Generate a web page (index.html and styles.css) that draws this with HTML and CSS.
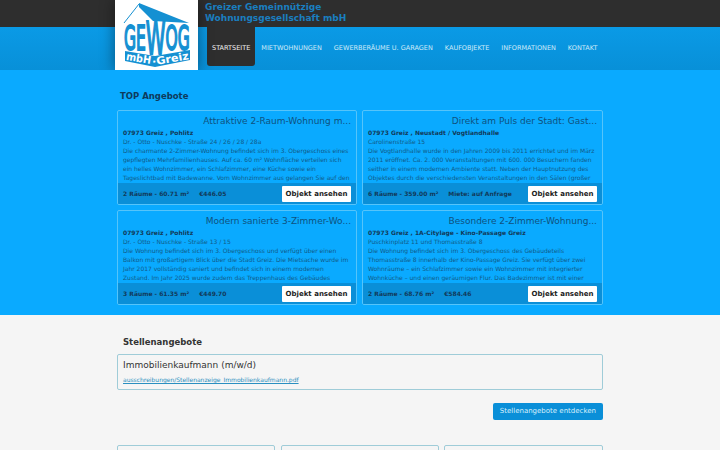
FILE: index.html
```html
<!DOCTYPE html>
<html lang="de">
<head>
    <meta charset="UTF-8">
    <meta name="viewport" content="width=device-width, initial-scale=1.0">
    <title>GEWOG Greiz</title>
    <link rel="stylesheet" href="styles.css">
</head>
<body>
    <header class="header">
        <a class="logo" href="#">
            <svg width="83" height="70" viewBox="0 0 83 70">
                <path class="logo-line" d="M9 23 L24 4"/>
                <path class="logo-fill" d="M24 3 L74 23 L38 21 L24 7 Z"/>
                <text class="logo-word" transform="translate(9 0) scale(.455 1)"><tspan y="50">GE</tspan><tspan y="54" class="logo-w">W</tspan><tspan y="50">OG</tspan></text>
                <path class="logo-fill" d="M10 51 L40 56 L75 50 L75 60 L40 67 L10 61 Z"/>
                <text class="logo-sub" x="11" y="62" textLength="25" lengthAdjust="spacingAndGlyphs" transform="rotate(9.5 24 59)">mbH</text>
                <text class="logo-sub" x="37" y="62.5" textLength="37" lengthAdjust="spacingAndGlyphs" transform="rotate(-10 55 60)">·Greiz</text>
            </svg>
        </a>
        <div class="topbar">
            <div class="brand">Greizer Gemeinnützige<br>Wohnungsgesellschaft mbH</div>
        </div>
        <nav class="nav">
            <a class="nav-item active" href="#">STARTSEITE</a>
            <a class="nav-item" href="#">MIETWOHNUNGEN</a>
            <a class="nav-item" href="#">GEWERBERÄUME U. GARAGEN</a>
            <a class="nav-item" href="#">KAUFOBJEKTE</a>
            <a class="nav-item" href="#">INFORMATIONEN</a>
            <a class="nav-item" href="#">KONTAKT</a>
        </nav>
    </header>

    <section class="top">
        <h2 class="top-title">TOP Angebote</h2>
        <div class="offers">
            <article class="offer">
                <h3 class="offer-title">Attraktive 2-Raum-Wohnung m...</h3>
                <div class="offer-body">
                    <b>07973 Greiz , Pohlitz</b>
                    <p>Dr. - Otto - Nuschke - Straße 24 / 26 / 28 / 28a</p>
                    <p>Die charmante 2-Zimmer-Wohnung befindet sich im 3. Obergeschoss eines gepflegten Mehrfamilienhauses. Auf ca. 60 m² Wohnfläche verteilen sich ein helles Wohnzimmer, ein Schlafzimmer, eine Küche sowie ein Tageslichtbad mit Badewanne. Vom Wohnzimmer aus gelangen Sie auf den</p>
                </div>
                <div class="offer-foot">
                    <span class="offer-size">2 Räume - 60.71 m²</span>
                    <span class="offer-price">€446.05</span>
                    <a class="offer-btn" href="#">Objekt ansehen</a>
                </div>
            </article>
            <article class="offer">
                <h3 class="offer-title">Direkt am Puls der Stadt: Gast...</h3>
                <div class="offer-body">
                    <b>07973 Greiz , Neustadt / Vogtlandhalle</b>
                    <p>Carolinenstraße 15</p>
                    <p>Die Vogtlandhalle wurde in den Jahren 2009 bis 2011 errichtet und im März 2011 eröffnet. Ca. 2. 000 Veranstaltungen mit 600. 000 Besuchern fanden seither in einem modernen Ambiente statt. Neben der Hauptnutzung des Objektes durch die verschiedensten Veranstaltungen in den Sälen (großer</p>
                </div>
                <div class="offer-foot">
                    <span class="offer-size">6 Räume - 359.00 m²</span>
                    <span class="offer-price">Miete: auf Anfrage</span>
                    <a class="offer-btn" href="#">Objekt ansehen</a>
                </div>
            </article>
            <article class="offer">
                <h3 class="offer-title">Modern sanierte 3-Zimmer-Wo...</h3>
                <div class="offer-body">
                    <b>07973 Greiz , Pohlitz</b>
                    <p>Dr. - Otto - Nuschke - Straße 13 / 15</p>
                    <p>Die Wohnung befindet sich im 3. Obergeschoss und verfügt über einen Balkon mit großartigem Blick über die Stadt Greiz. Die Mietsache wurde im Jahr 2017 vollständig saniert und befindet sich in einem modernen Zustand. Im Jahr 2025 wurde zudem das Treppenhaus des Gebäudes</p>
                </div>
                <div class="offer-foot">
                    <span class="offer-size">3 Räume - 61.35 m²</span>
                    <span class="offer-price">€449.70</span>
                    <a class="offer-btn" href="#">Objekt ansehen</a>
                </div>
            </article>
            <article class="offer">
                <h3 class="offer-title">Besondere 2-Zimmer-Wohnung...</h3>
                <div class="offer-body">
                    <b>07973 Greiz , 1A-Citylage - Kino-Passage Greiz</b>
                    <p>Puschkinplatz 11 und Thomasstraße 8</p>
                    <p>Die Wohnung befindet sich im 3. Obergeschoss des Gebäudeteils Thomasstraße 8 innerhalb der Kino-Passage Greiz. Sie verfügt über zwei Wohnräume – ein Schlafzimmer sowie ein Wohnzimmer mit integrierter Wohnküche – und einen geräumigen Flur. Das Badezimmer ist mit einer</p>
                </div>
                <div class="offer-foot">
                    <span class="offer-size">2 Räume - 68.76 m²</span>
                    <span class="offer-price">€584.46</span>
                    <a class="offer-btn" href="#">Objekt ansehen</a>
                </div>
            </article>
        </div>
    </section>

    <section class="jobs">
        <h2 class="jobs-title">Stellenangebote</h2>
        <div class="job">
            <h3 class="job-name">Immobilienkaufmann (m/w/d)</h3>
            <a class="job-link" href="#">ausschreibungen/Stellenanzeige_Immobilienkaufmann.pdf</a>
        </div>
        <div class="jobs-action">
            <a class="jobs-btn" href="#">Stellenangebote entdecken</a>
        </div>
        <div class="teasers">
            <div class="teaser"></div>
            <div class="teaser"></div>
            <div class="teaser"></div>
        </div>
    </section>
</body>
</html>
```

FILE: styles.css
```css
html, body {
    height: 450px;
    overflow: hidden;
}

body {
    margin: 0;
    font-family: "DejaVu Sans", sans-serif;
    background: #f5f5f5;
}

a {
    text-decoration: none;
}

.header {
    position: relative;
    overflow: hidden;
}

.logo {
    position: absolute;
    left: 115px;
    top: 0;
    width: 83px;
    height: 70px;
    background: #fff;
    box-shadow: 0 0 14px rgba(0, 0, 0, .45);
}

.logo-fill {
    fill: #1590d2;
}

.logo-line {
    stroke: #1590d2;
    stroke-width: 1;
    fill: none;
}

.logo-word {
    font-size: 34px;
    fill: #1590d2;
    stroke: #1590d2;
    stroke-width: 2;
}

.logo-w {
    font-size: 44px;
}

.logo-sub {
    font-size: 10.5px;
    font-weight: bold;
    fill: #fff;
}

.topbar {
    height: 27px;
    background: #2e2e2e;
    padding-left: 205px;
    box-sizing: border-box;
}

.brand {
    font-size: 9px;
    font-weight: bold;
    line-height: 11px;
    padding-top: 2px;
    color: #1a7fc0;
}

.nav {
    height: 43px;
    padding-left: 207px;
    display: flex;
    align-items: flex-start;
    background: linear-gradient(#0a9ae6, #0890d8);
}

.nav-item {
    font-size: 6.5px;
    line-height: 35px;
    padding: 4px 6px 0;
    color: #cfeaf8;
}

.nav-item.active {
    background: #2e2e2e;
    color: #f0f0f0;
    padding: 4px 5px 0;
    border-radius: 0 0 3px 3px;
}

.top {
    height: 245px;
    box-sizing: border-box;
    padding: 20px 117px 0;
    background: #0aaaff;
}

.top-title {
    margin: 0 0 8px 3px;
    font-size: 8.5px;
    line-height: 12px;
    color: #0e3a5c;
}

.offers {
    display: grid;
    grid-template-columns: 240px 241px;
    grid-auto-rows: 95px;
    column-gap: 5px;
    row-gap: 5px;
}

.offer {
    border: 1px solid #55c4fa;
    border-radius: 2px;
    display: flex;
    flex-direction: column;
    overflow: hidden;
}

.offer-title {
    margin: 0;
    padding: 3px 5px 0;
    font-size: 9px;
    font-weight: normal;
    line-height: 14px;
    text-align: right;
    white-space: nowrap;
    color: #0f5280;
}

.offer-body {
    flex: 1;
    min-height: 0;
    overflow: hidden;
    padding: 0 5px;
    font-size: 6px;
    line-height: 9px;
    color: #115a88;
}

.offer-body b {
    display: block;
    color: #123a5a;
}

.offer-body p {
    margin: 0;
}

.offer-foot {
    height: 21px;
    display: flex;
    align-items: center;
    padding: 0 5px;
    font-size: 6px;
    font-weight: bold;
    color: #123a5a;
    background: #0a8fd8;
}

.offer-size {
    margin-right: 10px;
}

.offer-btn {
    margin-left: auto;
    background: #fff;
    color: #222;
    font-size: 7px;
    line-height: 16px;
    padding: 0 3.5px;
    border-radius: 1px;
}

.jobs {
    padding: 20px 117px 0;
}

.jobs-title {
    margin: 0 0 5px 6px;
    font-size: 8.5px;
    line-height: 14px;
    color: #333;
}

.job {
    height: 36px;
    box-sizing: border-box;
    padding: 4px 5px 0;
    border: 1px solid #9fccd8;
    border-radius: 2px;
}

.job-name {
    margin: 0 0 4px;
    font-size: 9px;
    font-weight: normal;
    line-height: 12px;
    color: #333;
}

.job-link {
    display: block;
    font-size: 6px;
    line-height: 9px;
    color: #2a8fc0;
    text-decoration: underline;
}

.jobs-action {
    display: flex;
    justify-content: flex-end;
    margin-top: 13px;
}

.jobs-btn {
    background: #0a8fd8;
    color: #d8f0fc;
    font-size: 7px;
    line-height: 17px;
    padding: 0 7px;
    border-radius: 2px;
}

.teasers {
    display: grid;
    grid-template-columns: 158px 158px 159px;
    column-gap: 5.5px;
    margin-top: 25px;
}

.teaser {
    height: 60px;
    border: 1px solid #9fccd8;
    border-radius: 2px;
}
```
